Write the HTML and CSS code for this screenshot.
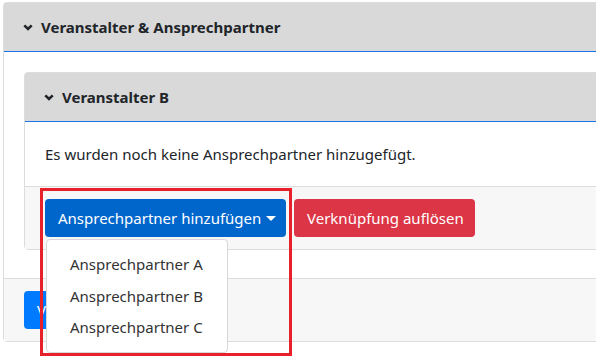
FILE: index.html
```html
<!DOCTYPE html>
<html lang="de">

<head>
    <meta charset="UTF-8">
    <meta name="viewport" content="width=device-width, initial-scale=1.0">
    <title>Veranstalter &amp; Ansprechpartner</title>
    <link rel="stylesheet" href="styles.css">
</head>

<body>
    <div class="card card-outer">
        <div class="card-header">
            <svg class="chevron" viewBox="0 0 10 7" width="10" height="7"><path d="M1.3 1.3 5 5 8.7 1.3" /></svg>
            <span>Veranstalter &amp; Ansprechpartner</span>
        </div>
        <div class="card-body">
            <div class="card card-inner">
                <div class="card-header">
                    <svg class="chevron" viewBox="0 0 10 7" width="10" height="7"><path d="M1.3 1.3 5 5 8.7 1.3" /></svg>
                    <span>Veranstalter B</span>
                </div>
                <div class="card-body">
                    <p class="empty">Es wurden noch keine Ansprechpartner hinzugefügt.</p>
                </div>
                <div class="card-footer">
                    <div class="dropdown">
                        <button class="btn btn-blue">Ansprechpartner hinzufügen <span class="caret"></span></button>
                        <ul class="dropdown-menu">
                            <li>Ansprechpartner A</li>
                            <li>Ansprechpartner B</li>
                            <li>Ansprechpartner C</li>
                        </ul>
                        <div class="highlight"></div>
                    </div>
                    <button class="btn btn-red">Verknüpfung auflösen</button>
                </div>
            </div>
        </div>
        <div class="card-footer">
            <button class="btn btn-primary">Veranstalter hinzufügen</button>
        </div>
    </div>
</body>
</html>
```

FILE: styles.css
```css
html {
    height: 357px;
}

body {
    margin: 0;
    padding: 2px 0 0 3px;
    min-height: 355px;
    background: white;
    color: #212529;
    font-family: 'Noto Sans', 'Open Sans', sans-serif;
    font-size: 15px;
    line-height: 24px;
    overflow: hidden;
}

.card {
    border: 1px solid #dcdcdc;
    border-radius: 4px;
    background: white;
}

.card-outer {
    width: 640px;
}

.card-header {
    display: flex;
    align-items: center;
    gap: 8px;
    background: #d9d9d9;
    padding: 12px 19px;
    border-bottom: 1px solid #1a73e8;
    font-weight: bold;
    height: 24px;
}

.chevron {
    fill: none;
    stroke: #212529;
    stroke-width: 2.6;
}

.card-body {
    padding: 20px;
}

.card-outer > .card-body {
    padding: 20px 20px 28px;
}

.card-footer {
    display: flex;
    gap: 8px;
    background: #f7f7f7;
    border-top: 1px solid #dcdcdc;
    padding: 12px 20px;
}

.empty {
    margin: 0;
}

.btn {
    font: inherit;
    height: 38px;
    padding: 0 13px;
    border: none;
    border-radius: 4px;
    color: white;
    white-space: nowrap;
    cursor: pointer;
}

.btn-blue {
    background-color: #0066cc;
    width: 241px;
}

.btn-red {
    background-color: #dc3545;
    width: 181px;
}

.btn-primary {
    background-color: #007bff;
}

.caret {
    display: inline-block;
    border-top: 5px solid white;
    border-left: 5px solid transparent;
    border-right: 5px solid transparent;
    vertical-align: 3px;
    margin-left: 1px;
}

.dropdown {
    position: relative;
}

.dropdown-menu {
    position: absolute;
    top: 40px;
    left: 1px;
    width: 180px;
    margin: 0;
    padding: 9px 0 8px;
    list-style: none;
    background: white;
    border: 1px solid #d8d8d8;
    border-radius: 4px;
    z-index: 2;
}

.dropdown-menu li {
    padding: 4px 23px;
    line-height: 23.5px;
    color: #333;
}

.highlight {
    position: absolute;
    top: -11px;
    left: -5px;
    width: 246px;
    height: 162px;
    border: 3px solid #e8202a;
    z-index: 3;
}
```
